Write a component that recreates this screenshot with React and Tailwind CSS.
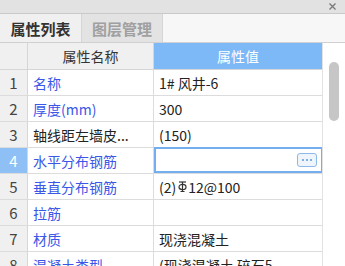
import React from "react";

const rows = [
  { n: "1", name: "名称", blue: true, value: "1# 风井-6" },
  { n: "2", name: "厚度(mm)", blue: true, value: "300" },
  { n: "3", name: "轴线距左墙皮...", blue: false, value: "(150)" },
  { n: "4", name: "水平分布钢筋", blue: true, value: "", selected: true },
  { n: "5", name: "垂直分布钢筋", blue: true, value: "rebar" },
  { n: "6", name: "拉筋", blue: true, value: "" },
  { n: "7", name: "材质", blue: true, value: "现浇混凝土" },
  { n: "8", name: "混凝土类型", blue: true, value: "(现浇混凝土 碎石5" },
];

function Rebar() {
  return (
    <svg width="9" height="12" viewBox="0 0 9 12" className="inline-block align-top mt-[1px] mr-[1px]">
      <line x1="1" y1="1" x2="8" y2="1" stroke="#333" strokeWidth="1.2" />
      <line x1="4.5" y1="1" x2="4.5" y2="11" stroke="#333" strokeWidth="1.2" />
      <ellipse cx="4.5" cy="6" rx="3.5" ry="2.6" fill="none" stroke="#333" strokeWidth="1.2" />
      <line x1="2.5" y1="10.5" x2="6.5" y2="10.5" stroke="#333" strokeWidth="1" />
    </svg>
  );
}

export default function App() {
  return (
    <div
      className="w-[345px] h-[266px] overflow-hidden bg-white text-[14px] leading-none"
      style={{ fontFamily: '"Noto Sans CJK SC", "Noto Sans", sans-serif' }}
    >
      {/* title bar */}
      <div className="h-[14px] bg-[#e2e2e2] border-b border-[#c9c9c9] flex items-center justify-end pr-[9px]">
        <svg width="7" height="7" viewBox="0 0 7 7">
          <path d="M0.5 0.5 L6.5 6.5 M6.5 0.5 L0.5 6.5" stroke="#7a7a7a" strokeWidth="1.4" />
        </svg>
      </div>
      {/* tabs */}
      <div className="h-[29px] flex bg-[#f7f7f7] border-b border-[#d0d0d0]">
        <div className="w-[82px] flex items-center justify-center bg-[#f0f0f0] border-r border-[#d6d6d6] font-bold text-[15px] text-[#333]">
          属性列表
        </div>
        <div className="w-[81px] flex items-center justify-center bg-[#e3e3e3] border-r border-[#d6d6d6] font-bold text-[15px] text-[#a0a0a0]">
          图层管理
        </div>
        <div className="flex-1" />
      </div>
      {/* table + scrollbar */}
      <div className="flex">
        <div className="w-[323px]">
          {/* header */}
          <div className="flex h-[27px] border-b border-[#d6d6d6]">
            <div className="w-[28px] bg-[#f0f0f0] border-r border-[#d6d6d6]" />
            <div className="w-[126px] bg-[#f0f0f0] border-r border-[#d6d6d6] flex items-center justify-center text-[#333]">
              属性名称
            </div>
            <div className="flex-1 bg-[#7db9f6] border-r border-[#6aa8ec] flex items-center justify-center text-white">
              属性值
            </div>
          </div>
          {rows.map((r) => (
            <div key={r.n} className="flex h-[26px] border-b border-[#dcdcdc]">
              <div
                className={
                  r.selected
                    ? "w-[28px] bg-[#8ec0f5] border-r border-[#d6d6d6] flex items-center justify-center text-white text-[15px]"
                    : "w-[28px] bg-[#f0f0f0] border-r border-[#d6d6d6] flex items-center justify-center text-[#444] text-[15px]"
                }
              >
                {r.n}
              </div>
              <div
                className={
                  r.blue
                    ? "w-[126px] border-r border-[#dcdcdc] flex items-center pl-[5px] text-[#3a57e8] whitespace-nowrap overflow-hidden"
                    : "w-[126px] border-r border-[#dcdcdc] flex items-center pl-[5px] text-[#222] whitespace-nowrap overflow-hidden"
                }
              >
                {r.name}
              </div>
              {r.selected ? (
                <div className="flex-1 border-2 border-[#74aef0] -mt-[1px] h-[26px] flex items-center justify-end pr-[4px]">
                  <div className="w-[20px] h-[14px] rounded-[3px] border border-[#8cb9ea] bg-[#eef5fd] flex items-center justify-center gap-[2px]">
                    <span className="w-[2px] h-[2px] rounded-full bg-[#5b95d8]" />
                    <span className="w-[2px] h-[2px] rounded-full bg-[#5b95d8]" />
                    <span className="w-[2px] h-[2px] rounded-full bg-[#5b95d8]" />
                  </div>
                </div>
              ) : (
                <div className="flex-1 border-r border-[#dcdcdc] flex items-center pl-[5px] text-[#222] whitespace-nowrap overflow-hidden">
                  {r.value === "rebar" ? (
                    <span className="flex items-center">
                      (2)<span className="ml-[2px]"><Rebar /></span>12@100
                    </span>
                  ) : (
                    r.value
                  )}
                </div>
              )}
            </div>
          ))}
        </div>
        {/* scrollbar */}
        <div className="w-[22px] border-l border-[#e2e2e2] bg-white flex justify-center pt-[19px] -ml-[1px]">
          <div className="w-[10px] h-[59px] rounded-full bg-[#c6c6c6]" />
        </div>
      </div>
    </div>
  );
}
